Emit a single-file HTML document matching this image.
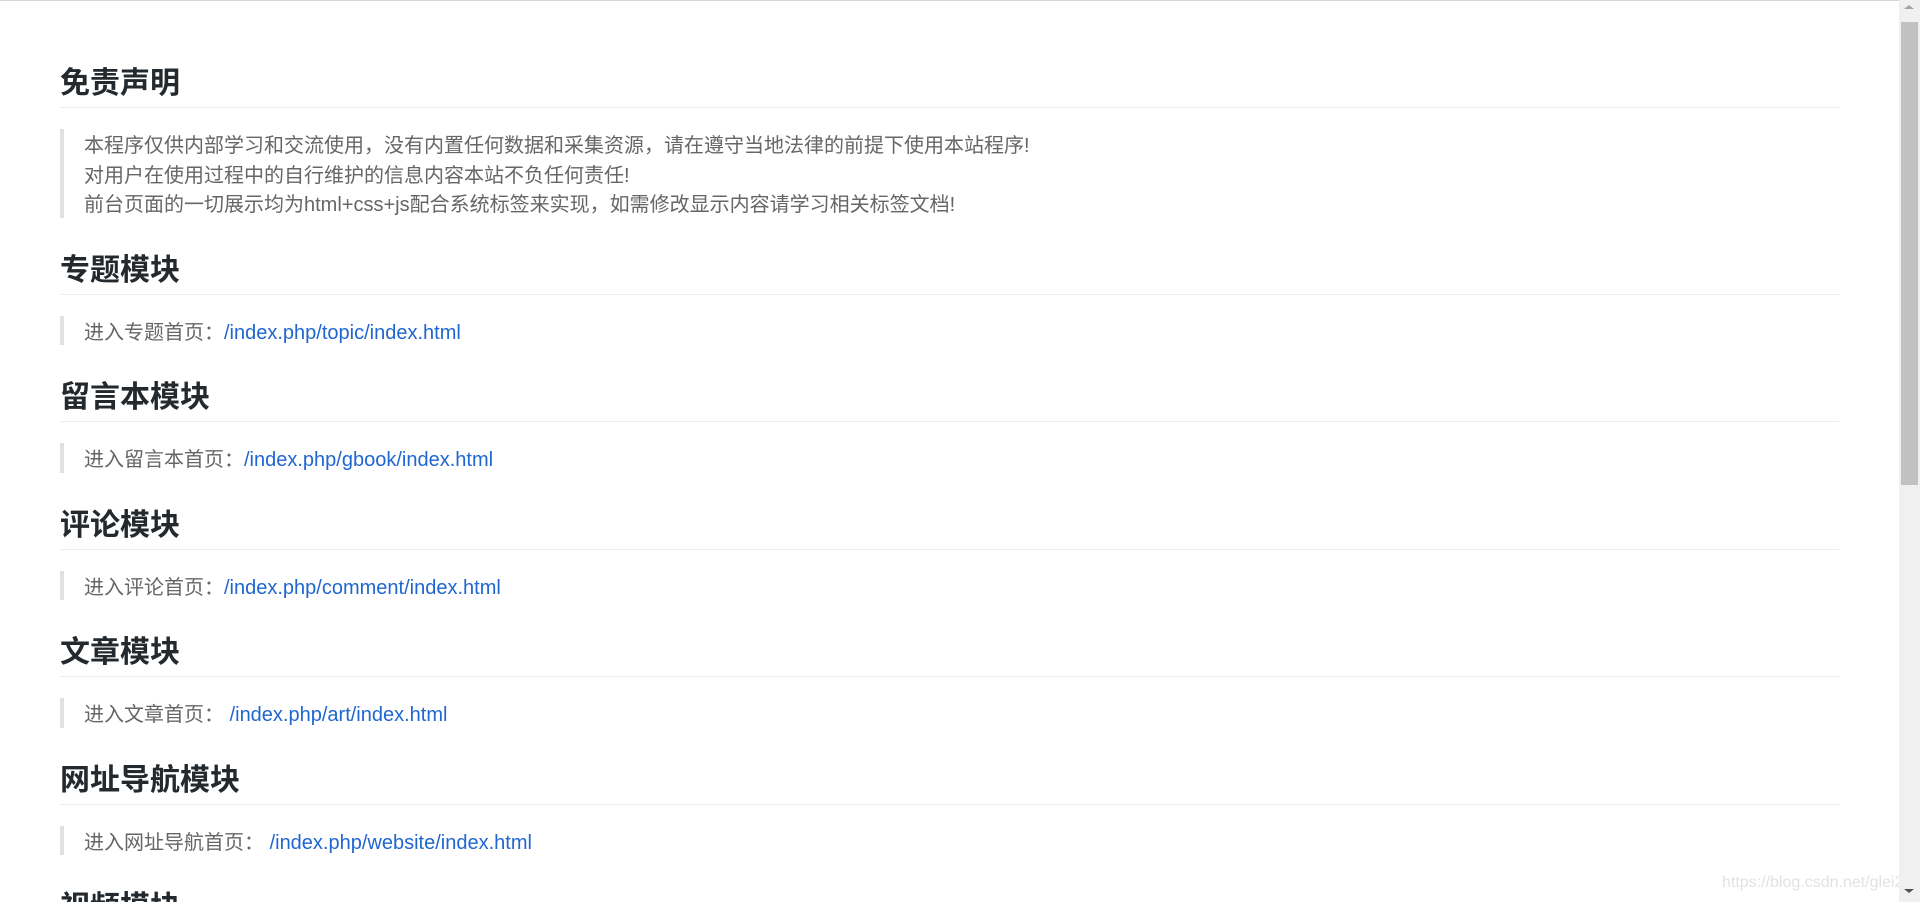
<!DOCTYPE html>
<html><head><meta charset="utf-8">
<style>
html,body{margin:0;padding:0;overflow:hidden;background:#fff;}
body{width:1920px;height:902px;position:relative;font-family:"Liberation Sans","Noto Sans CJK SC",sans-serif;}
.top{position:absolute;left:0;top:0;width:1899px;height:1px;background:#d6d6d6;}
.wrap{position:absolute;left:60px;top:63px;width:1779px;height:839px;overflow:hidden;}
h2{margin:0;font-size:30px;line-height:36px;font-weight:bold;color:#24292e;padding-bottom:8px;border-bottom:1px solid #eaecef;margin-bottom:21px;}
blockquote{margin:0 0 32px 0;border-left:4px solid #dfe2e5;padding-left:20px;font-size:20px;line-height:29.5px;color:#666;}
.s{position:relative;top:3px;}
a{color:#1f66d1;text-decoration:none;}
.sb{position:absolute;left:1899px;top:0;width:21px;height:902px;background:#f0f0f0;}
.thumb{position:absolute;left:2px;top:22px;width:17px;height:463px;background:#c1c1c1;}
.up{position:absolute;left:5px;top:5px;width:0;height:0;border-left:5px solid transparent;border-right:5px solid transparent;border-bottom:4px solid #a3a3a3;}
.dn{position:absolute;left:5px;top:889px;width:0;height:0;border-left:5px solid transparent;border-right:5px solid transparent;border-top:4px solid #505050;}
.wm{position:absolute;left:1722px;top:874px;font-size:16px;color:#e2e2e2;font-family:"Liberation Sans",sans-serif;}
</style></head><body>
<div class="top"></div>
<div class="wrap">
<h2><span class="s">免责声明</span></h2>
<blockquote><div class="s">本程序仅供内部学习和交流使用，没有内置任何数据和采集资源，请在遵守当地法律的前提下使用本站程序!<br>对用户在使用过程中的自行维护的信息内容本站不负任何责任!<br>前台页面的一切展示均为html+css+js配合系统标签来实现，如需修改显示内容请学习相关标签文档!</div></blockquote>
<h2><span class="s">专题模块</span></h2>
<blockquote><div class="s">进入专题首页：<a>/index.php/topic/index.html</a></div></blockquote>
<h2><span class="s">留言本模块</span></h2>
<blockquote><div class="s">进入留言本首页：<a>/index.php/gbook/index.html</a></div></blockquote>
<h2><span class="s">评论模块</span></h2>
<blockquote><div class="s">进入评论首页：<a>/index.php/comment/index.html</a></div></blockquote>
<h2><span class="s">文章模块</span></h2>
<blockquote><div class="s">进入文章首页： <a>/index.php/art/index.html</a></div></blockquote>
<h2><span class="s">网址导航模块</span></h2>
<blockquote><div class="s">进入网址导航首页： <a>/index.php/website/index.html</a></div></blockquote>
<h2><span class="s">视频模块</span></h2>
<blockquote><div class="s">进入视频首页：<a>/index.php/vod/index.html</a></div></blockquote>
</div>
<div class="wm">https://blog.csdn.net/glei20</div>
<div class="sb"><div class="up"></div><div class="thumb"></div><div class="dn"></div></div>
</body></html>
